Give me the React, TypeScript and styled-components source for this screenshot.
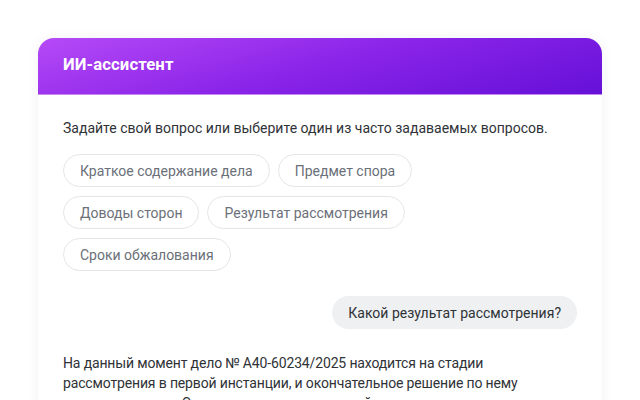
import React from "react";
import styled, { createGlobalStyle } from "styled-components";

const Global = createGlobalStyle`
  html, body { margin: 0; padding: 0; background: #ffffff; }
  body { font-family: Roboto, "Noto Sans", Arial, sans-serif; -webkit-font-smoothing: antialiased; }
  * { box-sizing: border-box; }
`;

const Page = styled.div`
  width: 640px;
  height: 400px;
  overflow: hidden;
  padding: 38px 38px 0 38px;
`;

const Card = styled.div`
  width: 564px;
  border-radius: 16px 16px 0 0;
  background: #ffffff;
  box-shadow: 0 0 14px rgba(0, 0, 0, 0.05);
  overflow: hidden;
  height: 400px;
`;

const Header = styled.div`
  height: 57px;
  display: flex;
  align-items: center;
  padding: 0 25px 4px;
  background: linear-gradient(165deg, #b64af7 0%, #8a24e8 50%, #6510d8 100%);
  border-bottom: 1px solid #c48af2;
`;

const Title = styled.h1`
  margin: 0;
  color: #ffffff;
  font-size: 16.7px;
  font-weight: 700;
  letter-spacing: 0.1px;
`;

const Body = styled.div`
  padding: 23px 25px 0;
  display: flex;
  flex-direction: column;
`;

const Intro = styled.p`
  margin: 0;
  font-size: 14px;
  line-height: 20px;
  color: #2f3237;
`;

const Chips = styled.div`
  margin-top: 16px;
  display: flex;
  flex-wrap: wrap;
  gap: 9px 8px;
  max-width: 360px;
`;

const Chip = styled.button`
  height: 33px;
  padding: 0 16px;
  border: 1px solid #e3e5e8;
  border-radius: 17px;
  background: #ffffff;
  color: #6b7079;
  font-family: inherit;
  font-size: 14px;
  white-space: nowrap;
  cursor: pointer;
`;

const UserRow = styled.div`
  margin-top: 25px;
  display: flex;
  justify-content: flex-end;
`;

const UserBubble = styled.div`
  height: 33px;
  display: flex;
  align-items: center;
  padding: 0 16px;
  border-radius: 17px;
  background: #eef0f2;
  color: #2f3237;
  font-size: 14px;
`;

const Answer = styled.p`
  margin: 24px 0 0;
  max-width: 470px;
  font-size: 14px;
  letter-spacing: -0.15px;
  line-height: 20px;
  color: #2f3237;
`;

const chips = [
  "Краткое содержание дела",
  "Предмет спора",
  "Доводы сторон",
  "Результат рассмотрения",
  "Сроки обжалования",
];

export default function App() {
  return (
    <>
      <Global />
      <Page>
        <Card>
          <Header>
            <Title>ИИ-ассистент</Title>
          </Header>
          <Body>
            <Intro>Задайте свой вопрос или выберите один из часто задаваемых вопросов.</Intro>
            <Chips>
              {chips.map((c) => (
                <Chip key={c}>{c}</Chip>
              ))}
            </Chips>
            <UserRow>
              <UserBubble>Какой результат рассмотрения?</UserBubble>
            </UserRow>
            <Answer>
              На данный момент дело № А40-60234/2025 находится на стадии рассмотрения в первой инстанции, и окончательное решение по нему еще не вынесено. Сумма взыскания на данный момент составляет
            </Answer>
          </Body>
        </Card>
      </Page>
    </>
  );
}
